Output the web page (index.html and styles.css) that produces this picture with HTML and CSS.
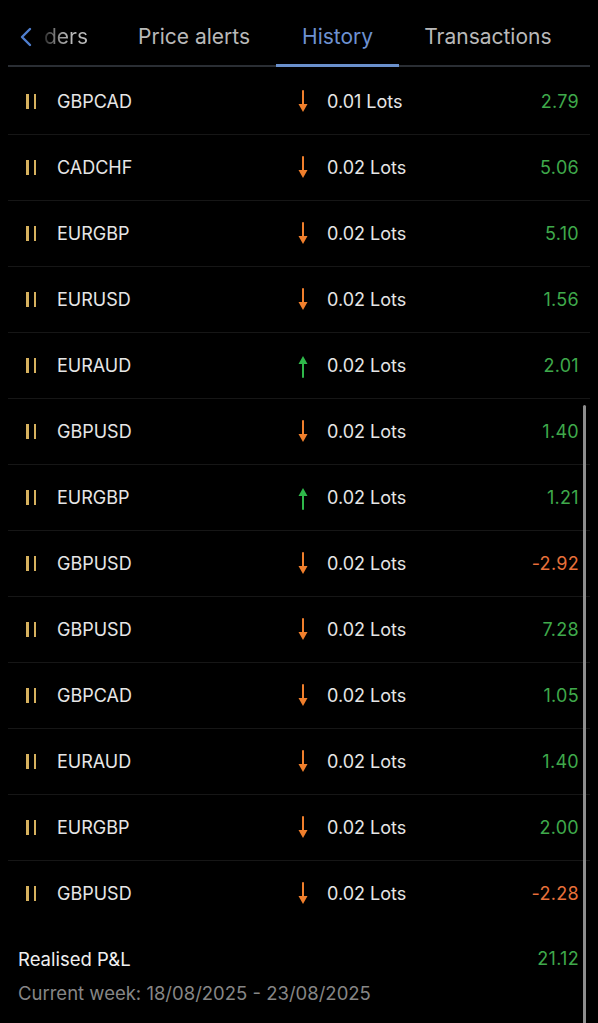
FILE: index.html
```html
<!DOCTYPE html>
<html lang="en">
<head>
    <meta charset="utf-8">
    <title>History</title>
    <link rel="stylesheet" href="styles.css">
</head>
<body>
    <div class="screen">
        <div class="tabs">
            <div class="tab tab-first">
                <svg class="chevron" width="12" height="20" viewBox="0 0 12 20"><path d="M10 2 L2 10 L10 18" fill="none" stroke="#4f7fd0" stroke-width="2.4" stroke-linecap="round" stroke-linejoin="round"/></svg>
                <span class="fade">ders</span>
            </div>
            <div class="tab">Price alerts</div>
            <div class="tab active">History</div>
            <div class="tab tab-last">Transactions</div>
        </div>

        <div class="list">
            <div class="scrollbar"></div>
            <div class="row"><span class="bars"><i></i><i></i></span><span class="sym">GBPCAD</span><span class="dir down"></span><span class="lots">0.01 Lots</span><span class="val pos">2.79</span></div>
            <div class="row"><span class="bars"><i></i><i></i></span><span class="sym">CADCHF</span><span class="dir down"></span><span class="lots">0.02 Lots</span><span class="val pos">5.06</span></div>
            <div class="row"><span class="bars"><i></i><i></i></span><span class="sym">EURGBP</span><span class="dir down"></span><span class="lots">0.02 Lots</span><span class="val pos">5.10</span></div>
            <div class="row"><span class="bars"><i></i><i></i></span><span class="sym">EURUSD</span><span class="dir down"></span><span class="lots">0.02 Lots</span><span class="val pos">1.56</span></div>
            <div class="row"><span class="bars"><i></i><i></i></span><span class="sym">EURAUD</span><span class="dir up"></span><span class="lots">0.02 Lots</span><span class="val pos">2.01</span></div>
            <div class="row"><span class="bars"><i></i><i></i></span><span class="sym">GBPUSD</span><span class="dir down"></span><span class="lots">0.02 Lots</span><span class="val pos">1.40</span></div>
            <div class="row"><span class="bars"><i></i><i></i></span><span class="sym">EURGBP</span><span class="dir up"></span><span class="lots">0.02 Lots</span><span class="val pos">1.21</span></div>
            <div class="row"><span class="bars"><i></i><i></i></span><span class="sym">GBPUSD</span><span class="dir down"></span><span class="lots">0.02 Lots</span><span class="val neg">-2.92</span></div>
            <div class="row"><span class="bars"><i></i><i></i></span><span class="sym">GBPUSD</span><span class="dir down"></span><span class="lots">0.02 Lots</span><span class="val pos">7.28</span></div>
            <div class="row"><span class="bars"><i></i><i></i></span><span class="sym">GBPCAD</span><span class="dir down"></span><span class="lots">0.02 Lots</span><span class="val pos">1.05</span></div>
            <div class="row"><span class="bars"><i></i><i></i></span><span class="sym">EURAUD</span><span class="dir down"></span><span class="lots">0.02 Lots</span><span class="val pos">1.40</span></div>
            <div class="row"><span class="bars"><i></i><i></i></span><span class="sym">EURGBP</span><span class="dir down"></span><span class="lots">0.02 Lots</span><span class="val pos">2.00</span></div>
            <div class="row row-last"><span class="bars"><i></i><i></i></span><span class="sym">GBPUSD</span><span class="dir down"></span><span class="lots">0.02 Lots</span><span class="val neg">-2.28</span></div>

            <div class="summary">
                <div class="summary-line">
                    <span class="summary-title">Realised P&amp;L</span>
                    <span class="val pos">21.12</span>
                </div>
                <div class="summary-week">Current week: 18/08/2025 - 23/08/2025</div>
            </div>
        </div>
    </div>

    <script>
        // arrow icons
        var downSvg = '<svg width="12" height="26" viewBox="0 0 12 26"><path d="M6 2 V17" stroke="#f07f2c" stroke-width="2" stroke-linecap="round"/><path d="M1.5 15 L10.5 15 L6 23 Z" fill="#f07f2c"/></svg>';
        var upSvg = '<svg width="12" height="26" viewBox="0 0 12 26"><path d="M6 24 V9" stroke="#2fb84a" stroke-width="2" stroke-linecap="round"/><path d="M1.5 11 L10.5 11 L6 3 Z" fill="#2fb84a"/></svg>';
        document.querySelectorAll('.dir.down').forEach(function (el) { el.innerHTML = downSvg; });
        document.querySelectorAll('.dir.up').forEach(function (el) { el.innerHTML = upSvg; });
    </script>
</body>
</html>
```

FILE: styles.css
```css
body {
    margin: 0;
    background-color: #000000;
    font-family: 'Inter', 'Liberation Sans', sans-serif;
    color: #e4e4e4;
}
.screen {
    width: 598px;
    height: 1023px;
    overflow: hidden;
    background-color: #000000;
}
.tabs {
    display: flex;
    align-items: flex-end;
    margin: 0 8px;
}
.tab {
    font-size: 21px;
    line-height: 24px;
    color: #b9b9b9;
    padding: 25px 26px 16px 26px;
    border-bottom: 2px solid #2a2e34;
}
.tab-first {
    display: flex;
    align-items: center;
    gap: 12px;
    padding-left: 12px;
    padding-right: 24px;
}
.chevron {
    display: block;
}
.fade {
    background: linear-gradient(90deg, #2a2a2a 0%, #8a8a8a 30%, #b9b9b9 60%);
    -webkit-background-clip: text;
    background-clip: text;
    color: transparent;
}
.tab.active {
    color: #6e92d2;
    padding-bottom: 15px;
    border-bottom: 3px solid #6a90cc;
}
.tab-last {
    flex: 1;
    padding-left: 25px;
}
.list {
    position: relative;
    margin: 0 8px;
    padding-top: 2px;
}
.scrollbar {
    position: absolute;
    right: 4px;
    top: 338px;
    width: 3px;
    height: 640px;
    border-radius: 2px;
    background-color: #8e8e8e;
}
.row {
    display: grid;
    grid-template-columns: 31px 244px 26px 1fr auto;
    align-items: center;
    height: 65px;
    padding: 0 11px 0 18px;
    border-bottom: 1px solid #161616;
}
.row-last {
    border-bottom: none;
}
.bars {
    display: flex;
    gap: 5px;
}
.bars i {
    display: block;
    width: 2.5px;
    height: 15px;
    background-color: #d6b15e;
}
.sym {
    font-size: 18px;
    color: #e6e6e6;
}
.dir svg {
    display: block;
    margin-left: -4px;
}
.lots {
    font-size: 18px;
    color: #e6e6e6;
}
.val {
    font-size: 18px;
    letter-spacing: 0.3px;
    text-align: right;
}
.pos {
    color: #3fa94b;
}
.neg {
    color: #e7703a;
}
.summary {
    padding: 22px 11px 0 10px;
}
.summary-line {
    display: flex;
    justify-content: space-between;
    align-items: center;
    line-height: 22px;
}
.summary-title {
    font-size: 18.5px;
    color: #f0f0f0;
}
.summary-week {
    margin-top: 12px;
    font-size: 18.5px;
    line-height: 22px;
    color: #868686;
}
```
